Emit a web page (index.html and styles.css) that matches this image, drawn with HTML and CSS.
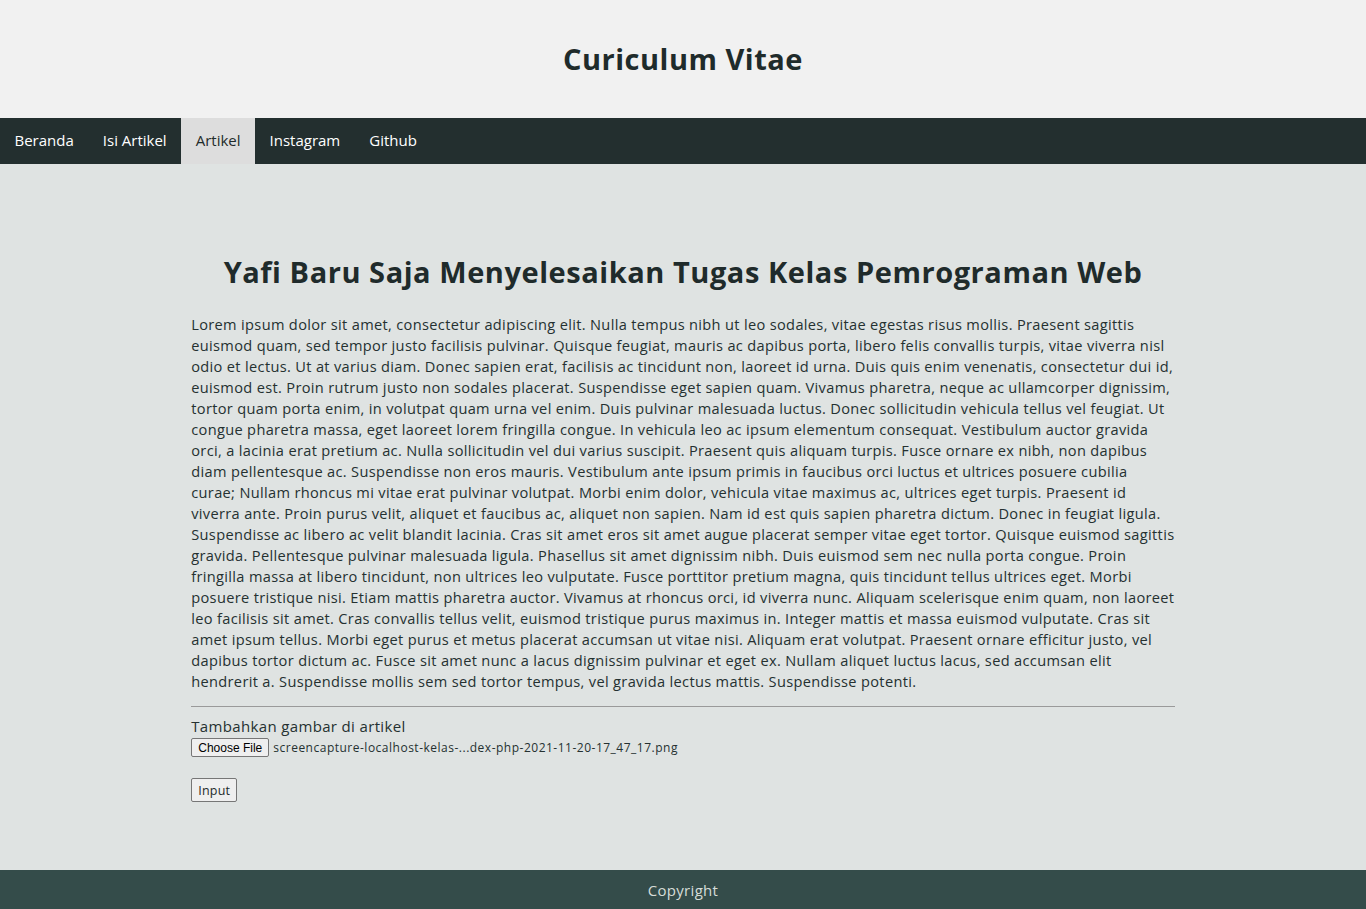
FILE: index.html
```html
<!DOCTYPE html>
<html lang="id">
<head>
<meta charset="utf-8">
<title>Curiculum Vitae</title>
<link rel="stylesheet" href="styles.css">
</head>
<body>
<header class="site-header">
  <h1 class="site-title">Curiculum Vitae</h1>
</header>
<nav class="nav">
  <a class="nav-item" href="#">Beranda</a>
  <a class="nav-item" href="#">Isi Artikel</a>
  <a class="nav-item active" href="#">Artikel</a>
  <a class="nav-item" href="#">Instagram</a>
  <a class="nav-item" href="#">Github</a>
</nav>
<main class="main">
  <article class="article">
    <h2 class="article-title">Yafi Baru Saja Menyelesaikan Tugas Kelas Pemrograman Web</h2>
    <p class="article-body">Lorem ipsum dolor sit amet, consectetur adipiscing elit. Nulla tempus nibh ut leo sodales, vitae egestas risus mollis. Praesent sagittis euismod quam, sed tempor justo facilisis pulvinar. Quisque feugiat, mauris ac dapibus porta, libero felis convallis turpis, vitae viverra nisl odio et lectus. Ut at varius diam. Donec sapien erat, facilisis ac tincidunt non, laoreet id urna. Duis quis enim venenatis, consectetur dui id, euismod est. Proin rutrum justo non sodales placerat. Suspendisse eget sapien quam. Vivamus pharetra, neque ac ullamcorper dignissim, tortor quam porta enim, in volutpat quam urna vel enim. Duis pulvinar malesuada luctus. Donec sollicitudin vehicula tellus vel feugiat. Ut congue pharetra massa, eget laoreet lorem fringilla congue. In vehicula leo ac ipsum elementum consequat. Vestibulum auctor gravida orci, a lacinia erat pretium ac. Nulla sollicitudin vel dui varius suscipit. Praesent quis aliquam turpis. Fusce ornare ex nibh, non dapibus diam pellentesque ac. Suspendisse non eros mauris. Vestibulum ante ipsum primis in faucibus orci luctus et ultrices posuere cubilia curae; Nullam rhoncus mi vitae erat pulvinar volutpat. Morbi enim dolor, vehicula vitae maximus ac, ultrices eget turpis. Praesent id viverra ante. Proin purus velit, aliquet et faucibus ac, aliquet non sapien. Nam id est quis sapien pharetra dictum. Donec in feugiat ligula. Suspendisse ac libero ac velit blandit lacinia. Cras sit amet eros sit amet augue placerat semper vitae eget tortor. Quisque euismod sagittis gravida. Pellentesque pulvinar malesuada ligula. Phasellus sit amet dignissim nibh. Duis euismod sem nec nulla porta congue. Proin fringilla massa at libero tincidunt, non ultrices leo vulputate. Fusce porttitor pretium magna, quis tincidunt tellus ultrices eget. Morbi posuere tristique nisi. Etiam mattis pharetra auctor. Vivamus at rhoncus orci, id viverra nunc. Aliquam scelerisque enim quam, non laoreet leo facilisis sit amet. Cras convallis tellus velit, euismod tristique purus maximus in. Integer mattis et massa euismod vulputate. Cras sit amet ipsum tellus. Morbi eget purus et metus placerat accumsan ut vitae nisi. Aliquam erat volutpat. Praesent ornare efficitur justo, vel dapibus tortor dictum ac. Fusce sit amet nunc a lacus dignissim pulvinar et eget ex. Nullam aliquet luctus lacus, sed accumsan elit hendrerit a. Suspendisse mollis sem sed tortor tempus, vel gravida lectus mattis. Suspendisse potenti.</p>
    <hr class="divider">
    <form class="upload">
      <label class="upload-label">Tambahkan gambar di artikel</label>
      <div class="file-row">
        <button type="button" class="file-btn">Choose File</button>
        <span class="file-name">screencapture-localhost-kelas-...dex-php-2021-11-20-17_47_17.png</span>
      </div>
      <button type="button" class="submit-btn">Input</button>
    </form>
  </article>
</main>
<footer class="footer">Copyright</footer>
</body>
</html>
```

FILE: styles.css
```css
* { box-sizing: border-box; }
html, body { margin: 0; padding: 0; }
body {
  font-family: "Open Sans", "Noto Sans", sans-serif;
  background: #dfe3e2;
  color: #223030;
}
.site-header {
  background: #f1f1f1;
  height: 118px;
  display: flex;
  align-items: center;
  justify-content: center;
}
.site-title {
  margin: 0 0 2px;
  font-size: 29px;
  letter-spacing: 0.5px;
  font-weight: 700;
  color: #1f2b2b;
  line-height: 1;
}
.nav {
  background: #232f2f;
  height: 46px;
  display: flex;
}
.nav-item {
  display: flex;
  align-items: center;
  padding: 0 14.5px 2px;
  color: #ffffff;
  text-decoration: none;
  font-size: 15px;
}
.nav-item.active {
  background: #dddddd;
  color: #1f2b2b;
}
.main {
  padding: 87px 0 68px;
}
.article {
  width: 72%;
  margin: 0 auto;
}
.article-title {
  margin: 0 0 21px;
  text-align: center;
  font-size: 29px;
  letter-spacing: 0.55px;
  line-height: 42px;
  font-weight: 700;
  color: #1f2b2b;
}
.article-body {
  margin: 0;
  font-size: 14.6px;
  letter-spacing: 0.33px;
  line-height: 21px;
  color: #253131;
}
.divider {
  margin: 14px 0 9px;
  border: 0;
  border-top: 1px solid #9a9a9a;
  height: 0;
}
.upload {
  display: flex;
  flex-direction: column;
  align-items: flex-start;
}
.upload-label {
  font-size: 15px;
  letter-spacing: 0.35px;
  line-height: 21px;
  color: #253131;
}
.file-row {
  display: flex;
  align-items: center;
  gap: 4px;
  margin-top: 1px;
}
.file-btn {
  font-family: "Liberation Sans", Arial, sans-serif;
  font-size: 12px;
  padding: 1px 6px;
  height: 19px;
  background: #efefef;
  border: 1px solid #767676;
  border-radius: 2px;
  color: #000;
}
.file-name {
  font-size: 12px;
  letter-spacing: 0.5px;
  color: #253131;
}
.submit-btn {
  margin-top: 21px;
  font-family: inherit;
  font-size: 12.5px;
  letter-spacing: 0.2px;
  height: 24px;
  padding: 0 6px;
  background: #efefef;
  border: 1px solid #767676;
  border-radius: 2px;
  color: #1f2b2b;
}
.footer {
  background: #344c4a;
  height: 39px;
  display: flex;
  align-items: center;
  justify-content: center;
  color: #d6dcd8;
  font-size: 15px;
  letter-spacing: 0.3px;
}
```
